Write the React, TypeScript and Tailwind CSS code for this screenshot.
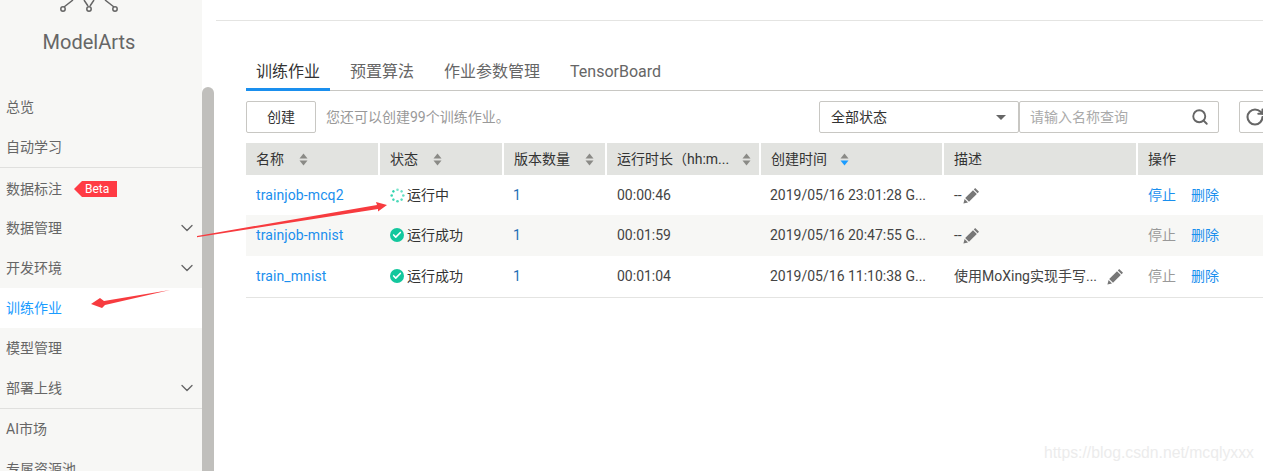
import { ChevronDown, Search, RotateCw, Check } from 'lucide-react';

const FONT = "font-['Roboto','Noto_Sans_CJK_SC',sans-serif]";

// Sidebar rows, in order; groups are split by a thin line
const MENU_TOP = [{ label: '总览' }, { label: '自动学习' }];
const MENU_MID = [
  { label: '数据标注', beta: true },
  { label: '数据管理', arrow: true },
  { label: '开发环境', arrow: true },
  { label: '训练作业', active: true },
  { label: '模型管理' },
  { label: '部署上线', arrow: true },
];
const MENU_BOTTOM = [{ label: 'AI市场' }, { label: '专属资源池' }];

const JOBS = [
  { name: 'trainjob-mcq2', status: '运行中', running: true, version: '1', time: '00:00:46', created: '2019/05/16 23:01:28 G...', desc: '--' },
  { name: 'trainjob-mnist', status: '运行成功', version: '1', time: '00:01:59', created: '2019/05/16 20:47:55 G...', desc: '--' },
  { name: 'train_mnist', status: '运行成功', version: '1', time: '00:01:04', created: '2019/05/16 11:10:38 G...', desc: '使用MoXing实现手写...' },
];

const SortIcon = ({ active }: { active?: boolean }) => (
  <svg width="9" height="13" viewBox="0 0 9 13" className="shrink-0">
    <path d="M4.5 0.5 L8.5 5.5 H0.5 Z" fill="#8a8a86" />
    <path d="M4.5 12.5 L8.5 7.5 H0.5 Z" fill={active ? '#1a9cff' : '#8a8a86'} />
  </svg>
);

const Spinner = () => (
  <svg width="15" height="15" viewBox="0 0 15 15" className="shrink-0">
    {[0, 45, 90, 135, 180, 225, 270, 315].map((a, i) => (
      <circle key={a} cx="7.5" cy="1.7" r="1.3" fill="#1fd0a8" opacity={0.6 + i * 0.05} transform={`rotate(${a} 7.5 7.5)`} />
    ))}
  </svg>
);

// Chunky 45 degree pencil with a detached tip
const EditIcon = () => (
  <svg width="17" height="17" viewBox="0 0 17 17" className="shrink-0">
    <path d="M12.2 1 L16 4.8 L14.6 6.2 L10.8 2.4 Z" fill="#777" />
    <path d="M10 3.2 L13.8 7 L6 14.8 L2.2 11 Z" fill="#777" />
    <path d="M1.6 12 L5 15.4 L0.4 16.6 Z" fill="#777" />
  </svg>
);

const MenuRow = ({ label, arrow, beta, active }: { label: string; arrow?: boolean; beta?: boolean; active?: boolean }) => (
  <div className={`h-10 flex items-center pl-[6px] pr-[5px] text-sm ${beta ? 'pt-[2px]' : ''} ${active ? 'bg-white text-[#1a9cff]' : 'text-[#666]'}`}>
    <span>{label}</span>
    {beta && (
      <span className="ml-[12px] flex items-center">
        <span className="w-0 h-0 border-y-[8px] border-y-transparent border-r-[8px] border-r-[#ff3b44]" />
        <span className="bg-[#ff3b44] text-white text-xs leading-4 h-4 pl-[3px] pr-2">Beta</span>
      </span>
    )}
    {arrow && <ChevronDown className="ml-auto w-5 h-5 text-[#666]" strokeWidth={1.6} />}
  </div>
);

const Head = ({ label, width, sort, active }: { label: string; width: number; sort?: boolean; active?: boolean }) => (
  <th style={{ width }} className="bg-[#e2e3e0] border-r-2 border-white h-8 pl-[10px] pr-2 font-normal text-left text-sm text-[#333]">
    <div className="flex items-center justify-between whitespace-nowrap">
      <span>{label}</span>
      {sort && <span className={`flex-1 flex ${label.length > 6 ? 'justify-end' : active ? 'pl-[13px]' : 'pl-[15px]'}`}><SortIcon active={active} /></span>}
    </div>
  </th>
);

export default function App() {
  return (
    <div className={`relative flex w-[1263px] h-[471px] overflow-hidden bg-white ${FONT}`}>
      {/* sidebar */}
      <aside className="w-[202px] shrink-0 bg-[#f7f7f5]">
        <div className="h-[87px] w-[178px] flex flex-col items-center">
          <svg width="60" height="12" viewBox="0 0 60 12" className="shrink-0" fill="none" stroke="#666" strokeWidth="1.5">
            <path d="M5 7 L14 0 M29 6 L25 0 M31 6 L35 0 M55 7 L46 0" />
            <circle cx="4" cy="9" r="2.2" />
            <circle cx="30" cy="9" r="2.2" />
            <circle cx="56" cy="9" r="2.2" />
          </svg>
          <div className="mt-[16px] text-xl leading-7 text-[#666]">ModelArts</div>
        </div>
        {MENU_TOP.map((m) => <MenuRow key={m.label} {...m} />)}
        <div className="border-t border-[#e0e0de]" />
        {MENU_MID.map((m) => <MenuRow key={m.label} {...m} />)}
        <div className="border-t border-[#e0e0de]" />
        {MENU_BOTTOM.map((m) => <MenuRow key={m.label} {...m} />)}
      </aside>
      {/* scrollbar */}
      <div className="w-3 shrink-0 mt-[87px] bg-[#c0bfbc] rounded-t-[6px]" />

      {/* main */}
      <main className="flex-1 min-w-0 pl-[2px]">
        <div className="mt-5 border-t border-[#e4e4e2]" />
        <div className="pl-[30px]">
          {/* tabs */}
          <div className="mt-[36px] h-[34px] flex items-stretch gap-[10px] border-b border-[#c8c7c3] text-base text-[#666] w-[1017px]">
            <div className="px-[10px] pt-[3px] border-b-[3px] border-[#1a8fee] text-[#333] -mb-[1px]">训练作业</div>
            <div className="px-[10px] pt-[3px]">预置算法</div>
            <div className="px-[10px] pt-[3px]">作业参数管理</div>
            <div className="px-[10px] pt-[3px]">TensorBoard</div>
          </div>

          {/* toolbar */}
          <div className="mt-[10px] flex items-center h-8 w-[1033px]">
            <button className="w-[70px] h-8 border border-[#c8c7c3] rounded-[2px] text-sm text-[#333] bg-white">创建</button>
            <span className="ml-[10px] text-sm text-[#999]">您还可以创建99个训练作业。</span>
            <div className="ml-auto flex items-center w-[200px] h-8 border border-[#c8c7c3] rounded-[2px] pl-[11px] pr-[12px] text-sm text-[#333]">
              <span>全部状态</span>
              <span className="ml-auto w-0 h-0 border-x-[5px] border-x-transparent border-t-[5px] border-t-[#666]" />
            </div>
            <div className="flex items-center w-[200px] h-8 border border-[#c8c7c3] rounded-[2px] pl-[10px] pr-[9px] text-sm text-[#aaa]">
              <span>请输入名称查询</span>
              <Search className="ml-auto w-[18px] h-[18px] text-[#666]" strokeWidth={2.5} />
            </div>
            <div className="ml-5 shrink-0 flex items-center w-[40px] h-8 border border-[#c8c7c3] rounded-[2px] pl-[5px]">
              <RotateCw className="w-5 h-5 text-[#666]" strokeWidth={2.5} />
            </div>
          </div>

          {/* table */}
          <table className="mt-[10px] border-collapse table-fixed w-[1040px]">
            <thead>
              <tr>
                <Head label="名称" width={133} sort />
                <Head label="状态" width={124} sort />
                <Head label="版本数量" width={103} sort />
                <Head label="运行时长（hh:m..." width={154} sort />
                <Head label="创建时间" width={183} sort active />
                <Head label="描述" width={194} />
                <Head label="操作" width={149} />
              </tr>
            </thead>
            <tbody>
              {JOBS.map((job, i) => (
                <tr key={job.name} className={`text-sm text-[#444] ${i === 1 ? 'h-[41px] bg-[#f7f7f5] [&>td]:pb-[1px]' : i === 0 ? 'h-10' : 'h-[41px] border-b border-[#e4e4e2]'}`}>
                  <td className="pl-[10px] text-[#1a8fee] tracking-[0.1px]">{job.name}</td>
                  <td className="pl-[11px]">
                    <div className={`flex items-center text-[#333] ${job.running ? 'gap-[2px]' : 'gap-[3px]'}`}>
                      {job.running ? <Spinner /> : (
                        <span className="w-[14px] h-[14px] rounded-full bg-[#13c79d] flex items-center justify-center shrink-0">
                          <Check className="w-[10px] h-[10px] text-white" strokeWidth={4} />
                        </span>
                      )}
                      <span>{job.status}</span>
                    </div>
                  </td>
                  <td className="pl-[10px] text-[#1f6fb5]">{job.version}</td>
                  <td className="pl-[11px]">{job.time}</td>
                  <td className="pl-[10px] whitespace-nowrap">{job.created}</td>
                  <td className="pl-[11px]">
                    <div className={`flex items-center whitespace-nowrap ${job.desc === '--' ? 'gap-[1px]' : 'gap-[10px]'}`}>
                      <span>{job.desc}</span>
                      <EditIcon />
                    </div>
                  </td>
                  <td className="pl-[11px] whitespace-nowrap">
                    <span className={i === 0 ? 'text-[#1a8fee]' : 'text-[#999]'}>停止</span>
                    <span className="ml-[15px] text-[#1a8fee]">删除</span>
                  </td>
                </tr>
              ))}
            </tbody>
          </table>
        </div>
      </main>

      {/* red annotation arrows */}
      <svg width="1263" height="471" className="absolute inset-0 pointer-events-none">
        <path d="M197 236 L377 205 L376 202 L387 205 L378 211.5 L378 209 L197 237.2 Z" fill="#f73b3f" />
        <path d="M170 290 L104 301 L100 298 L91 304 L102 308 L105 305 Z" fill="#f73b3f" />
      </svg>
      {/* watermark */}
      <span className="absolute right-[9px] bottom-[8px] text-[15.75px] leading-5 text-[#ececec] font-['Liberation_Sans',sans-serif]">https://blog.csdn.net/mcqlyxxx</span>
    </div>
  );
}
